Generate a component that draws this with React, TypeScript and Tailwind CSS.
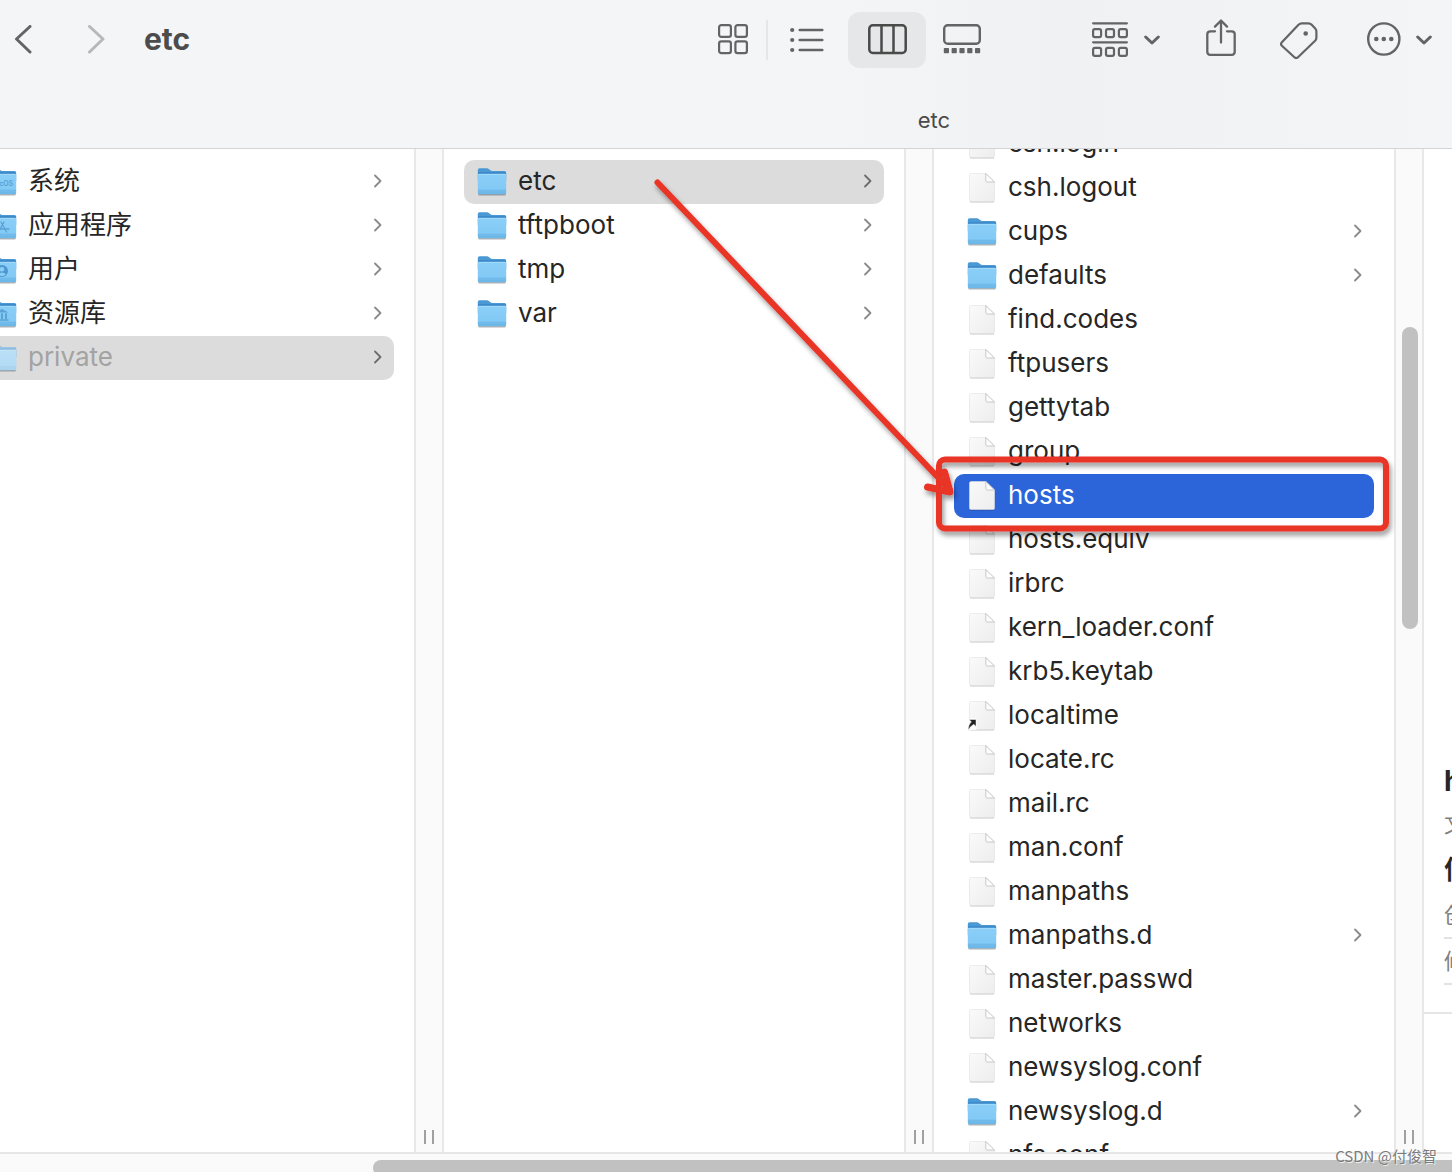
import React, { useState } from 'react';

type IconKind = 'folder' | 'file' | 'alias';
type Badge = 'macos' | 'apps' | 'user' | 'library';

interface Entry {
  name: string;
  kind: IconKind;
  badge?: Badge;
  faded?: boolean;
}

const rootEntries: Entry[] = [
  { name: '系统', kind: 'folder', badge: 'macos' },
  { name: '应用程序', kind: 'folder', badge: 'apps' },
  { name: '用户', kind: 'folder', badge: 'user' },
  { name: '资源库', kind: 'folder', badge: 'library' },
  { name: 'private', kind: 'folder', faded: true },
];

const privateEntries: Entry[] = [
  { name: 'etc', kind: 'folder' },
  { name: 'tftpboot', kind: 'folder' },
  { name: 'tmp', kind: 'folder' },
  { name: 'var', kind: 'folder' },
];

const etcEntries: Entry[] = [
  { name: 'csh.login', kind: 'file' },
  { name: 'csh.logout', kind: 'file' },
  { name: 'cups', kind: 'folder' },
  { name: 'defaults', kind: 'folder' },
  { name: 'find.codes', kind: 'file' },
  { name: 'ftpusers', kind: 'file' },
  { name: 'gettytab', kind: 'file' },
  { name: 'group', kind: 'file' },
  { name: 'hosts', kind: 'file' },
  { name: 'hosts.equiv', kind: 'file' },
  { name: 'irbrc', kind: 'file' },
  { name: 'kern_loader.conf', kind: 'file' },
  { name: 'krb5.keytab', kind: 'file' },
  { name: 'localtime', kind: 'alias' },
  { name: 'locate.rc', kind: 'file' },
  { name: 'mail.rc', kind: 'file' },
  { name: 'man.conf', kind: 'file' },
  { name: 'manpaths', kind: 'file' },
  { name: 'manpaths.d', kind: 'folder' },
  { name: 'master.passwd', kind: 'file' },
  { name: 'networks', kind: 'file' },
  { name: 'newsyslog.conf', kind: 'file' },
  { name: 'newsyslog.d', kind: 'folder' },
  { name: 'nfs.conf', kind: 'file' },
];

const FolderIcon: React.FC<{ badge?: Badge; faded?: boolean }> = ({ badge, faded }) => (
  <svg viewBox="0 0 30 30" className="w-[30px] h-[30px] shrink-0">
    <path d="M2 27.6h26" stroke="#000" strokeOpacity=".3" strokeWidth="1.6" strokeLinecap="round" />
    <path d="M.8 3Q.8 1.200 2.600 1.200h7.400q1 0 1.800.7l1.600 1.400q.8.7 1.900.7h12.200q1.700 0 1.700 1.700V14H.8z" fill="#4a98d4" />
    <path d="M1.300 6.200h27.400" stroke="#2c79bd" strokeWidth="1.300" />
    <path d="M.8 8Q.8 6.800 2.200 6.800h25.600q1.400 0 1.400 1.200v17.800q0 1.500-1.500 1.500H2.300q-1.500 0-1.500-1.500z" fill="url(#folderFront)" />
    <path d="M1.600 7.400h26.800" stroke="#a5dcfb" strokeWidth=".9" />
    <path d="M1 23.300h28M1 25h28" stroke="#63aee0" strokeWidth=".6" />
    {badge === 'macos' && (
      <text x="14" y="18.500" textAnchor="middle" fontSize="7" fontWeight="600" fill="#5a9fd2">
        macOS
      </text>
    )}
    {badge === 'apps' && (
      <path
        d="M12 20l5-9M14 11l5.500 10M10 18h8M18.500 18h3.500"
        fill="none"
        stroke="#5ba3d6"
        strokeWidth="1.300"
        strokeLinecap="round"
      />
    )}
    {badge === 'user' && (
      <>
        <circle cx="15" cy="16" r="6" fill="#4c98cf" />
        <circle cx="15" cy="14.300" r="2.300" fill="#8ccdf6" />
        <path d="M11 19.500q4-4 8 0-4 3-8 0z" fill="#8ccdf6" />
      </>
    )}
    {badge === 'library' && (
      <path
        d="M8.500 13.500L15 10l6.500 3.500zM10 14.300h2v5.700h-2zM14 14.300h2v5.700h-2zM18 14.300h2v5.700h-2zM8.500 20.300h13v1.500h-13z"
        fill="#5ba3d6"
      />
    )}
    {faded && (
      <path
        d="M.8 3Q.8 1.200 2.600 1.200h7.400q1 0 1.800.7l1.600 1.400q.8.7 1.900.7h12.200q1.700 0 1.700 1.700v20.100q0 1.500-1.500 1.500H2.300q-1.500 0-1.500-1.500z"
        fill="#e8f0f6"
        fillOpacity=".5"
      />
    )}
  </svg>
);

const FileIcon: React.FC<{ alias?: boolean }> = ({ alias }) => (
  <svg viewBox="0 0 30 30" className="w-[30px] h-[30px] shrink-0 overflow-visible">
    <path d="M3.500 28.800h23" stroke="#000" strokeOpacity=".22" strokeWidth="1.400" strokeLinecap="round" />
    <path
      d="M4.300.500H18.800L27.500 9v18.200q0 1.300-1.300 1.300H4q-1.500 0-1.500-1.500V2Q2.500.500 4.300.500z"
      fill="url(#filePage)"
      stroke="#e0e0e0"
      strokeWidth=".6"
    />
    <path d="M18.800.500L27.500 9h-7.200q-1.500 0-1.500-1.500z" fill="#fdfdfd" stroke="#bdbdbd" strokeWidth=".8" strokeLinejoin="round" />
    {alias && (
      <>
        <rect x="-.5" y="17" width="10" height="12" rx="1" fill="#fff" opacity=".85" />
        <path d="M2 18.500h7v7l-2.200-2.200Q3.500 25 1.500 29.200 1 24 4.300 20.800z" fill="#222" stroke="#fff" strokeWidth=".5" />
      </>
    )}
  </svg>
);

const ChevronRow: React.FC<{ strong?: boolean }> = ({ strong }) => (
  <svg viewBox="0 0 10 16" className="w-[10px] h-4 shrink-0" fill="none">
    <path
      d="M2 1.500L7.500 7 2 12.500"
      stroke={strong ? '#6c6c6c' : '#8a8a8a'}
      strokeWidth="1.800"
      strokeLinecap="round"
      strokeLinejoin="round"
    />
  </svg>
);

interface ColumnProps {
  label: string;
  entries: Entry[];
  selected: string;
  active?: boolean;
  scrolled?: boolean;
  onSelect: (name: string) => void;
}

const Column: React.FC<ColumnProps> = ({ label, entries, selected, active, scrolled, onSelect }) => (
  <section aria-label={label} className="flex w-[490px] shrink-0 overflow-hidden">
    <ul className={`flex-1 px-5 ${scrolled ? '-mt-[27px]' : 'pt-[11px]'}`}>
      {entries.map((entry) => {
        const isSelected = entry.name === selected;
        const bg = isSelected ? (active ? 'bg-[#2c64d9]' : 'bg-[#dcdcdc]') : '';
        const color = isSelected && active ? 'text-white' : entry.faded ? 'text-[#a3a3a3]' : 'text-[#262626]';
        return (
          <li key={entry.name}>
            <button
              type="button"
              onClick={() => onSelect(entry.name)}
              className={`flex h-11 w-full items-center rounded-[10px] pl-[13px] pr-[11px] text-left ${bg} ${color}`}
            >
              {entry.kind === 'folder' ? (
                <FolderIcon badge={entry.badge} faded={entry.faded} />
              ) : (
                <FileIcon alias={entry.kind === 'alias'} />
              )}
              <span className="ml-[11px] flex-1 pb-[2px] text-[26px] leading-8 whitespace-nowrap">{entry.name}</span>
              {entry.kind === 'folder' && <ChevronRow strong={isSelected} />}
            </button>
          </li>
        );
      })}
    </ul>
    <div className="relative flex w-[30px] shrink-0 items-end justify-center gap-[6px] border-x-2 border-[#e8e8e8] bg-[#fafafa] pb-2">
      {scrolled && <div className="absolute left-[6px] top-[178px] h-[302px] w-4 rounded-full bg-[#c1c1c1]" />}
      <span className="h-[14px] w-[2px] bg-[#a0a0a0]" />
      <span className="h-[14px] w-[2px] bg-[#a0a0a0]" />
    </div>
  </section>
);

const MenuChevron = () => (
  <svg viewBox="0 0 16 10" className="h-[10px] w-4" fill="none">
    <path d="M1.700 2L8 8l6.300-6" stroke="#636466" strokeWidth="3" strokeLinecap="round" strokeLinejoin="round" />
  </svg>
);

const Toolbar = () => (
  <div className="flex h-20 items-center pl-[14px] pr-5 text-[#636466]">
    <button type="button" aria-label="后退">
      <svg viewBox="0 0 20 30" className="h-[30px] w-5" fill="none" stroke="currentColor" strokeWidth="3" strokeLinecap="round" strokeLinejoin="round">
        <path d="M16 1.500L2.500 14 16 27" />
      </svg>
    </button>
    <button type="button" aria-label="前进" className="ml-[52px] text-[#b7b8ba]">
      <svg viewBox="0 0 20 30" className="h-[30px] w-5" fill="none" stroke="currentColor" strokeWidth="3" strokeLinecap="round" strokeLinejoin="round">
        <path d="M3.500 1.500L17 14 3.500 27" />
      </svg>
    </button>
    <h1 className="ml-[38px] pb-[2px] text-[30px] leading-9 font-bold text-[#4c4c4c]">etc</h1>

    <div className="ml-auto flex items-center">
      <button type="button" aria-label="图标">
        <svg viewBox="0 0 30 32" className="h-8 w-[30px]" fill="none" stroke="currentColor" strokeWidth="2.200">
          <rect x="1.100" y="1.100" width="11.800" height="11.800" rx="2.200" />
          <rect x="17.400" y="1.100" width="11.500" height="11.800" rx="2.200" />
          <rect x="1.100" y="17.400" width="11.800" height="11.800" rx="2.200" />
          <rect x="17.400" y="17.400" width="11.500" height="11.800" rx="2.200" />
        </svg>
      </button>
      <span className="ml-[18px] h-10 w-[2px] bg-[#e5e6e8]" />
      <button type="button" aria-label="列表" className="ml-[22px]">
        <svg viewBox="0 0 34 26" className="h-[26px] w-[34px]" fill="currentColor">
          <circle cx="2.200" cy="3" r="2.100" />
          <circle cx="2.200" cy="13" r="2.100" />
          <circle cx="2.200" cy="23" r="2.100" />
          <path d="M9.700 3h22.600M9.700 13h22.600M9.700 23h22.600" stroke="currentColor" strokeWidth="2.500" strokeLinecap="round" />
        </svg>
      </button>
      <button type="button" aria-label="分栏" className="ml-6 flex h-14 w-[78px] items-center justify-center rounded-[12px] bg-[#e6e7e8] text-[#4a4a48]">
        <svg viewBox="0 0 39 32" className="h-8 w-[39px]" fill="none" stroke="currentColor" strokeWidth="2.500">
          <rect x="1.300" y="1.300" width="36.400" height="27.600" rx="3.500" />
          <path d="M13.500 1v28M25.500 1v28" />
        </svg>
      </button>
      <button type="button" aria-label="画廊" className="ml-[17px]">
        <svg viewBox="0 0 38 32" className="h-8 w-[38px]" fill="none">
          <rect x="1.200" y="1.200" width="35.600" height="18.600" rx="3.500" stroke="currentColor" strokeWidth="2.400" />
          <g fill="currentColor">
            <rect x=".8" y="24" width="5.200" height="5.200" rx=".8" />
            <rect x="8.600" y="24" width="5.200" height="5.200" rx=".8" />
            <rect x="16.400" y="24" width="5.200" height="5.200" rx=".8" />
            <rect x="24.200" y="24" width="5.200" height="5.200" rx=".8" />
            <rect x="32" y="24" width="5.200" height="5.200" rx=".8" />
          </g>
        </svg>
      </button>
      <button type="button" aria-label="群组" className="ml-[111px] flex items-center gap-4">
        <svg viewBox="0 0 36 38" className="h-[38px] w-9" fill="none" stroke="currentColor" strokeWidth="2.200" strokeLinecap="round">
          <path d="M1.100 2.300h33.800M1.100 21.300h33.800" />
          <rect x="1.100" y="8.100" width="8" height="8" rx="1.800" />
          <rect x="14" y="8.100" width="8" height="8" rx="1.800" />
          <rect x="26.900" y="8.100" width="8" height="8" rx="1.800" />
          <rect x="1.100" y="26.900" width="8" height="8" rx="1.800" />
          <rect x="14" y="26.900" width="8" height="8" rx="1.800" />
          <rect x="26.900" y="26.900" width="8" height="8" rx="1.800" />
        </svg>
        <MenuChevron />
      </button>
      <button type="button" aria-label="共享" className="ml-[45px]">
        <svg viewBox="0 0 32 42" className="h-[42px] w-8" fill="none" stroke="currentColor" strokeWidth="2.300" strokeLinecap="round" strokeLinejoin="round">
          <path d="M10 12.300H5.300q-3 0-3 3v17.500q0 3 3 3h21.400q3 0 3-3V15.300q0-3-3-3H22" />
          <path d="M16 23.500V2M10 7.600L16 1.500l6 6.100" />
        </svg>
      </button>
      <button type="button" aria-label="标签" className="ml-[43px]">
        <svg viewBox="0 0 38 38" className="h-[38px] w-[38px]" fill="none" stroke="currentColor" strokeWidth="2.200" strokeLinejoin="round">
          <path d="M18.500 3.700Q20 2.300 21.800 2.300h6.700q1.700 0 3 1.300l3.700 4q1.200 1.300 1.200 3v6.200q0 1.800-1.300 3L18 36.300q-1.800 1.700-3.600 0L1.900 24.800q-1.700-1.800 0-3.600z" />
          <circle cx="25.700" cy="12.500" r="2.300" fill="currentColor" stroke="none" />
        </svg>
      </button>
      <button type="button" aria-label="更多" className="ml-[49px] flex items-center gap-[15px]">
        <svg viewBox="0 0 34 36" className="h-9 w-[34px]" fill="none">
          <circle cx="16.800" cy="17" r="15.600" stroke="currentColor" strokeWidth="2.400" />
          <g fill="currentColor">
            <circle cx="9.300" cy="17" r="2.300" />
            <circle cx="16.800" cy="17" r="2.300" />
            <circle cx="24.300" cy="17" r="2.300" />
          </g>
        </svg>
        <MenuChevron />
      </button>
    </div>
  </div>
);

const Preview = () => (
  <aside aria-label="预览" className="min-w-0 flex-1 overflow-hidden whitespace-nowrap">
    <div className="border-b-2 border-[#e6e6e6] pl-5 pt-[612px] pb-[27px]">
      <h2 className="text-[28px] leading-10 font-bold text-[#262626]">hosts</h2>
      <p className="text-[22px] leading-[46px] text-[#808080]">文稿</p>
      <h3 className="text-[26px] leading-[46px] font-bold text-[#262626]">信息</h3>
      <dl className="text-[22px] leading-[44px] text-[#808080]">
        <dt className="border-b-2 border-[#e2e2e2]">创建时间</dt>
        <dt className="border-b-2 border-[#e2e2e2]">修改时间</dt>
      </dl>
    </div>
  </aside>
);

// hand-drawn marker pointing from the etc folder to the hosts file
const Marker = () => (
  <svg viewBox="0 0 760 380" className="pointer-events-none absolute left-[686px] top-[20px] h-[380px] w-[760px]" fill="none">
    <g stroke="#e83428" strokeLinecap="round" strokeLinejoin="round" filter="url(#markerShadow)">
      <rect x="299" y="290.500" width="447" height="69" rx="6" strokeWidth="6" />
      <path d="M17.500 13.500L310 321" strokeWidth="6" />
      <path d="M304.500 303L310 323 287.500 318" strokeWidth="7" />
    </g>
  </svg>
);

export default function App() {
  const [rootSelected, setRootSelected] = useState('private');
  const [privateSelected, setPrivateSelected] = useState('etc');
  const [etcSelected, setEtcSelected] = useState('hosts');

  return (
    <div className="relative flex h-screen flex-col overflow-hidden bg-white font-['Inter','Noto_Sans_CJK_SC',sans-serif]">
      <svg className="absolute h-0 w-0" aria-hidden="true">
        <defs>
          <linearGradient id="folderFront" x1="0" y1="0" x2="0" y2="1">
            <stop offset="0" stopColor="#8bcff8" />
            <stop offset=".75" stopColor="#82c9f5" />
            <stop offset="1" stopColor="#69b5e6" />
          </linearGradient>
          <linearGradient id="filePage" x1="0" y1="0" x2="1" y2="1">
            <stop offset="0" stopColor="#fafafa" />
            <stop offset="1" stopColor="#ededed" />
          </linearGradient>
          <filter id="markerShadow" x="-5%" y="-5%" width="110%" height="115%">
            <feDropShadow dx="2" dy="4" stdDeviation="2.500" floodColor="#000" floodOpacity=".4" />
          </filter>
        </defs>
      </svg>

      <header className="h-[149px] shrink-0 border-b border-[#d3d4d6] bg-[linear-gradient(90deg,#f4f5f7_0%,#f4f5f7_58%,#f0f1f3_73%,#f4f5f7_100%)]">
        <Toolbar />
        <p className="pl-[416px] pt-[26px] text-center text-[22px] leading-7 text-[#4a4a4a]">etc</p>
      </header>

      <main className="relative -ml-[46px] flex min-h-0 flex-1">
        <Column label="Macintosh HD" entries={rootEntries} selected={rootSelected} onSelect={setRootSelected} />
        <Column label="private" entries={privateEntries} selected={privateSelected} onSelect={setPrivateSelected} />
        <Column label="etc" entries={etcEntries} selected={etcSelected} onSelect={setEtcSelected} active scrolled />
        <Preview />
        <Marker />
      </main>

      <footer className="h-5 shrink-0 overflow-hidden border-t-2 border-[#e6e6e6] bg-[#fafafa] pl-[373px] pt-[6px]">
        <div className="h-4 rounded-l-full bg-[#c1c1c1]" />
      </footer>

      <p className="absolute bottom-[6px] right-[15px] font-['Noto_Sans_CJK_SC',sans-serif] text-[15px] leading-5 text-[#7c7c7c] [text-shadow:1px_1px_0_#ffffffb0]">
        CSDN @付俊智
      </p>
    </div>
  );
}
